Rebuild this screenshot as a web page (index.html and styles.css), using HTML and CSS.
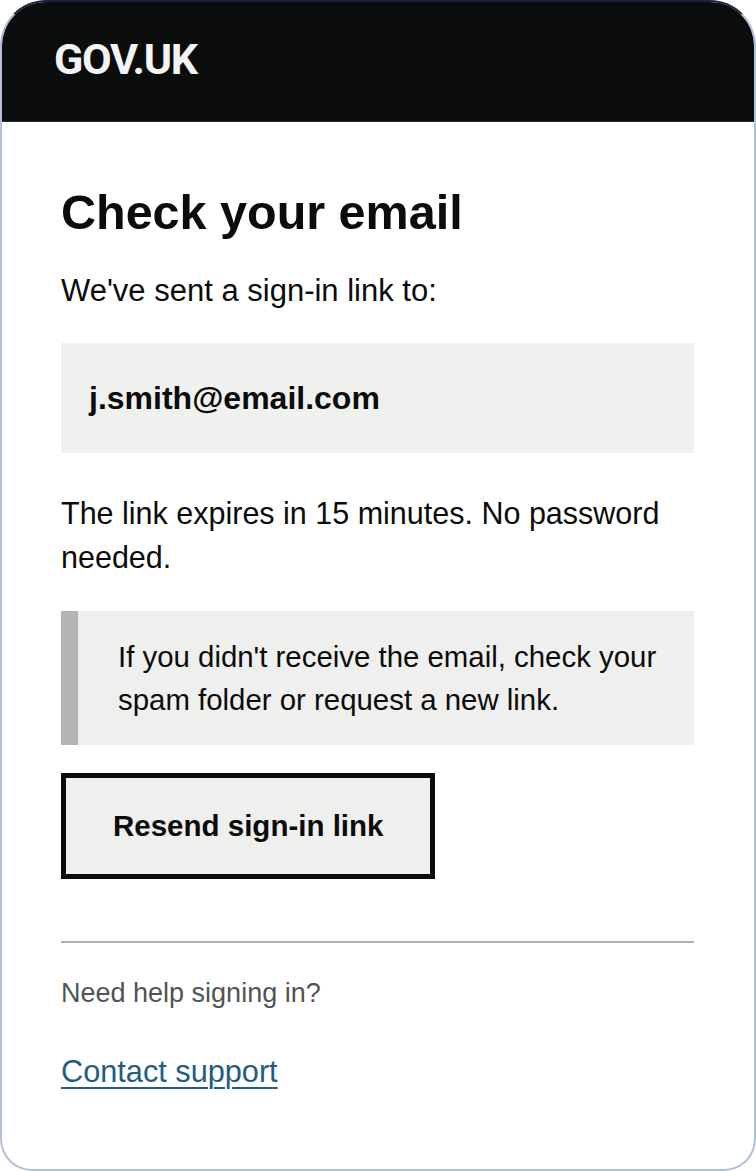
FILE: index.html
```html
<!DOCTYPE html>
<html lang="en">
<head>
<meta charset="utf-8">
<title>Check your email - GOV.UK</title>
<link rel="stylesheet" href="styles.css">
</head>
<body>
<div class="card">
  <header class="header">
    <span class="logo">GOV.UK</span>
  </header>
  <main class="content">
    <h1 class="title">Check your email</h1>
    <p class="body intro">We've sent a sign-in link to:</p>
    <div class="email-box">j.smith@email.com</div>
    <p class="body expires">The link expires in 15 minutes. No password needed.</p>
    <div class="inset">If you didn't receive the email, check your spam folder or request a new link.</div>
    <button class="button" type="button">Resend sign-in link</button>
    <hr class="divider">
    <p class="help">Need help signing in?</p>
    <a class="link" href="#">Contact support</a>
  </main>
</div>
</body>
</html>
```
FILE: styles.css
```css
html, body {
  margin: 0;
  padding: 0;
  background: #ffffff;
}

.card {
  box-sizing: border-box;
  width: 756px;
  height: 1171px;
  border: 2px solid #b4c0d8;
  border-top-color: #18223f;
  border-radius: 46px 46px 32px 32px;
  overflow: hidden;
  background: #ffffff;
  font-family: "Liberation Sans", Arial, sans-serif;
  color: #0b0c0c;
}

.header {
  height: 119px;
  background: #0b0c0c;
  padding-left: 52px;
  display: flex;
  align-items: flex-start;
  border-bottom: 1px solid #2a2c2e;
}

.logo {
  font-family: Roboto, "Liberation Sans", sans-serif;
  font-weight: 700;
  font-size: 43px;
  line-height: 50px;
  letter-spacing: -1.2px;
  color: #f4f4f4;
  margin-top: 32px;
}

.content {
  padding: 0 60px 0 59px;
  display: flex;
  flex-direction: column;
  align-items: stretch;
}

.title {
  margin: 62px 0 0 0;
  font-size: 48.5px;
  line-height: 56px;
  font-weight: 700;
}

.body {
  margin: 0;
  font-size: 30.5px;
  line-height: 44px;
}

.intro {
  margin-top: 29px;
  font-size: 31px;
}

.email-box {
  margin-top: 30px;
  background: #f0f0ef;
  padding: 33px 28px;
  font-size: 32px;
  line-height: 44px;
  font-weight: 700;
}

.expires {
  margin-top: 38px;
}

.inset {
  margin-top: 32px;
  background: #efefed;
  border-left: 17px solid #b5b5b5;
  padding: 24px 20px 24px 40px;
  font-size: 29.4px;
  line-height: 43px;
}

.button {
  align-self: flex-start;
  margin-top: 28px;
  box-sizing: border-box;
  height: 106px;
  padding: 0 47px;
  border: 5px solid #0b0c0c;
  background: #efefee;
  font-family: "Liberation Sans", Arial, sans-serif;
  font-size: 29.5px;
  line-height: 96px;
  font-weight: 700;
  color: #0b0c0c;
  border-radius: 0;
}

.divider {
  margin: 62px 0 0 0;
  border: 0;
  height: 2px;
  background: #b1b1b1;
}

.help {
  margin: 30px 0 0 0;
  font-size: 27px;
  line-height: 40px;
  color: #4f5456;
}

.link {
  align-self: flex-start;
  margin-top: 37px;
  font-size: 30.7px;
  line-height: 44px;
  color: #1f5d84;
  text-decoration: underline;
  text-decoration-thickness: 2px;
  text-underline-offset: 5px;
}
```
